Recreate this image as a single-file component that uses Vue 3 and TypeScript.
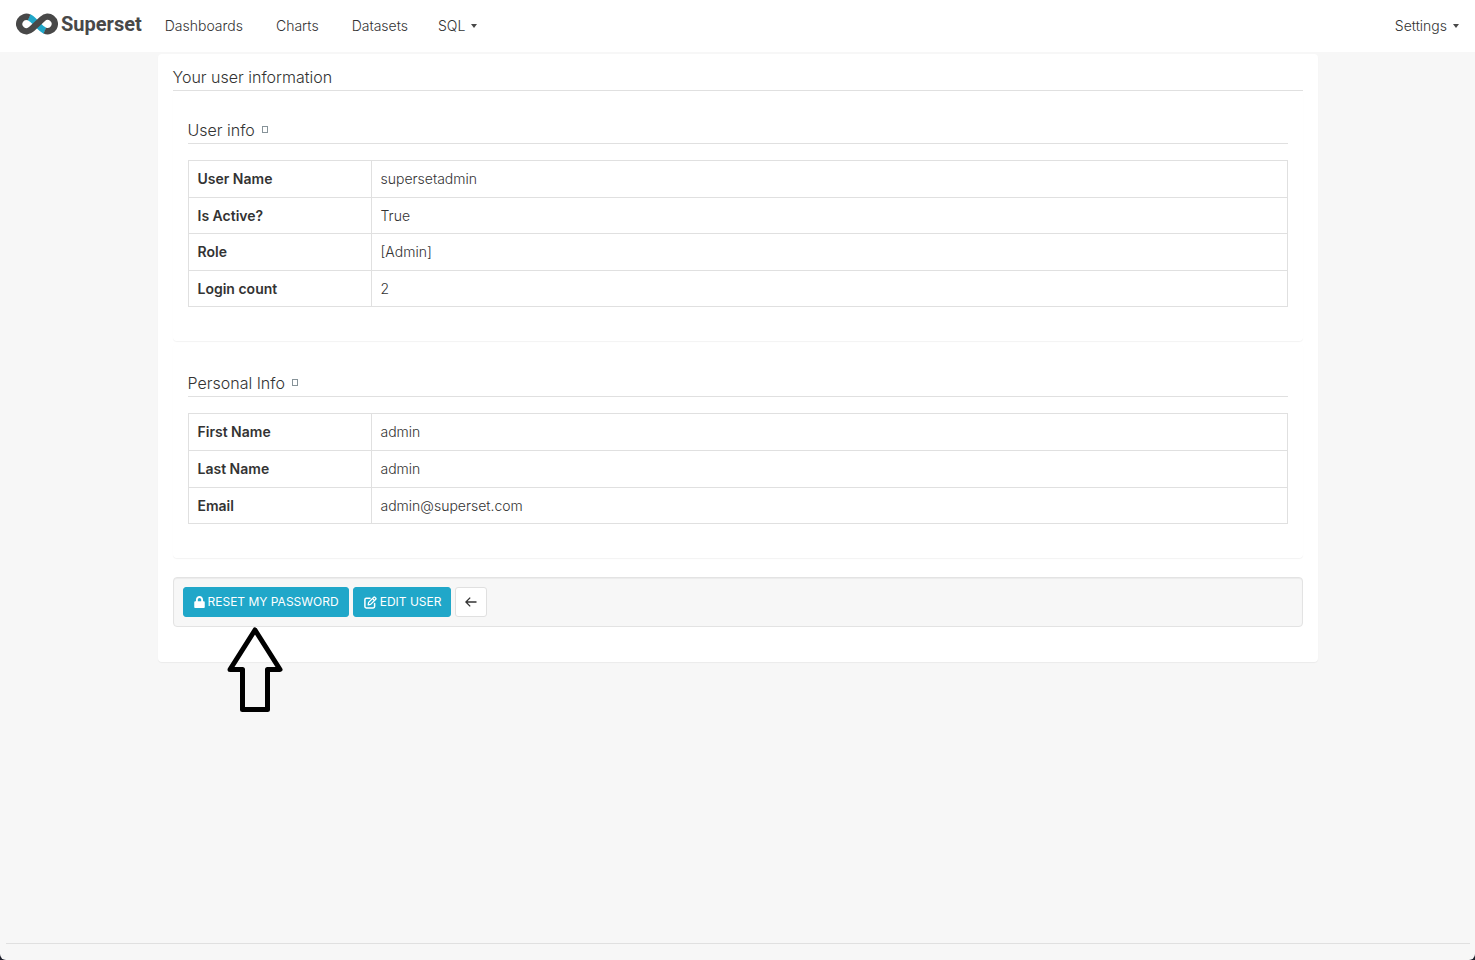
<script setup lang="ts">
interface InfoRow {
  label: string
  value: string
}

interface InfoSection {
  id: string
  title: string
  rows: InfoRow[]
}

const links: string[] = ['Dashboards', 'Charts', 'Datasets']

const sections: InfoSection[] = [
  {
    id: 'user-info',
    title: 'User info',
    rows: [
      { label: 'User Name', value: 'supersetadmin' },
      { label: 'Is Active?', value: 'True' },
      { label: 'Role', value: '[Admin]' },
      { label: 'Login count', value: '2' },
    ],
  },
  {
    id: 'personal-info',
    title: 'Personal Info',
    rows: [
      { label: 'First Name', value: 'admin' },
      { label: 'Last Name', value: 'admin' },
      { label: 'Email', value: 'admin@superset.com' },
    ],
  },
]
</script>

<template>
  <div class="page">
    <header class="navbar">
      <a class="brand" href="#" aria-label="Superset">
        <svg class="brand-mark" width="42" height="22" viewBox="0 0 42 22" fill="none" stroke-width="6.400" aria-hidden="true">
          <path d="M13 4.300C16 5.500 18 8 21 11S26 16.500 29 17.700" stroke="#20a7c9" />
          <path d="M13.200 4.400A7.200 7.200 0 1 0 15.500 16.100L26.500 5.900A7.200 7.200 0 1 1 28.800 17.600" stroke="#484848" />
        </svg>
        <span class="brand-name">Superset</span>
      </a>
      <nav class="menu" aria-label="Main">
        <a v-for="link in links" :key="link" class="menu-link" href="#">{{ link }}</a>
        <button class="menu-toggle" type="button">SQL<span class="caret"></span></button>
      </nav>
      <button class="menu-toggle settings" type="button">Settings<span class="caret"></span></button>
    </header>

    <main class="card">
      <h1 class="title">Your user information</h1>
      <section v-for="section in sections" :key="section.id" class="panel">
        <h2 class="title">
          <a class="panel-link" href="#">{{ section.title }}<span class="missing-glyph"></span></a>
        </h2>
        <table class="info">
          <tbody>
            <tr v-for="row in section.rows" :key="row.label">
              <th scope="row">{{ row.label }}</th>
              <td>{{ row.value }}</td>
            </tr>
          </tbody>
        </table>
      </section>

      <div class="actions">
        <button class="btn primary" type="button">
          <svg width="11" height="12" viewBox="0 0 448 512" fill="currentColor" aria-hidden="true">
            <path d="M400 224h-24v-72C376 68.200 307.800 0 224 0S72 68.200 72 152v72H48c-26.500 0-48 21.500-48 48v192c0 26.500 21.500 48 48 48h352c26.500 0 48-21.500 48-48V272c0-26.500-21.500-48-48-48zm-104 0H152v-72c0-39.700 32.300-72 72-72s72 32.300 72 72v72z" />
          </svg>
          Reset my password
        </button>
        <button class="btn primary" type="button">
          <svg width="13" height="13" viewBox="0 0 13 13" fill="none" stroke="currentColor" stroke-width="1.500" stroke-linejoin="round" stroke-linecap="round" aria-hidden="true">
            <path d="M6 2.300H2.300Q0.900 2.300 0.900 3.700V10.600Q0.900 12 2.300 12H9.200Q10.600 12 10.600 10.600V7.400" />
            <path d="M4.200 8.800L4.600 6.400 9.800 1.200Q10.300 0.800 10.800 1.200L11.800 2.200Q12.200 2.700 11.800 3.200L6.600 8.400ZM8.600 2.600L10.400 4.400" stroke-width="1.300" />
          </svg>
          Edit user
        </button>
        <button class="btn back" type="button" aria-label="Back">
          <svg width="12" height="10" viewBox="0 0 12 10" fill="none" stroke="currentColor" stroke-width="1.300" aria-hidden="true">
            <path d="M11.500 5H1M5.200 0.600L0.900 5l4.300 4.400" />
          </svg>
        </button>
        <svg class="pointer" width="56" height="86" viewBox="0 0 56 86" fill="none" stroke="#000" stroke-width="5" stroke-linejoin="round" aria-hidden="true">
          <path d="M28 3L53 42.500H40.500V82.500H15.500V42.500H3Z" />
        </svg>
      </div>
    </main>

    <footer class="footer"><hr /></footer>
  </div>
</template>

<style>
html {
  background: #1d1f2b;
}

body {
  margin: 0;
}
</style>

<style scoped>
* {
  box-sizing: border-box;
}

.page {
  display: flex;
  flex-direction: column;
  min-height: 100vh;
  background: #f7f7f7;
  border-radius: 0 0 6px 6px;
  color: #333;
  font-family: Inter, "Liberation Sans", sans-serif;
  font-size: 14px;
  font-weight: 300;
  line-height: 20px;
}

.navbar {
  display: flex;
  align-items: center;
  height: 52px;
  padding: 0 16px;
  background: #fff;
}

.brand {
  display: flex;
  align-items: center;
  gap: 3px;
  padding-bottom: 5px;
  color: #484848;
  text-decoration: none;
}

.brand-name {
  font-family: Roboto, sans-serif;
  font-size: 20px;
  font-weight: 700;
}

.menu {
  display: flex;
  gap: 33px;
  margin-left: 23px;
}

.menu-link,
.menu-toggle {
  color: #333;
  text-decoration: none;
}

.menu-toggle {
  display: flex;
  align-items: center;
  gap: 6px;
  padding: 0;
  border: 0;
  background: none;
  font: inherit;
}

.menu .menu-toggle {
  margin-left: -3px;
}

.settings {
  margin-left: auto;
}

.caret {
  border: 3px solid transparent;
  border-top: 4px solid #484848;
  border-bottom: 0;
}

.card {
  width: calc(100% - 32px);
  max-width: 1160px;
  margin: 2px auto 0;
  padding: 12px 15px 35px;
  background: #fff;
  border-radius: 4px;
  box-shadow: 0 1px 1px rgba(0, 0, 0, 0.05);
}

.title {
  margin: 0;
  padding-bottom: 2px;
  border-bottom: 1px solid #e0e0e0;
  font-size: 16px;
  font-weight: 300;
  line-height: 22px;
}

.panel {
  padding: 28px 15px 34px;
  border-radius: 4px;
  box-shadow: 0 1px 1px rgba(0, 0, 0, 0.05);
}

.panel + .panel {
  margin-top: 3px;
}

.panel-link {
  display: flex;
  align-items: center;
  gap: 7px;
  color: #333;
  text-decoration: none;
}

.missing-glyph {
  width: 6px;
  height: 7px;
  margin-bottom: 2px;
  border: 1px solid #879399;
}

.info {
  width: 100%;
  margin-top: 16px;
  border-collapse: collapse;
  line-height: 1.4;
}

.info th,
.info td {
  padding: 8px 9px;
  border: 1px solid #e0e0e0;
  text-align: left;
}

.info th {
  width: 183px;
  font-weight: 600;
}

.actions {
  position: relative;
  display: flex;
  flex-wrap: wrap;
  gap: 4px;
  margin-top: 19px;
  padding: 9px;
  background: #f7f7f7;
  border: 1px solid #e3e3e3;
  border-radius: 4px;
  box-shadow: inset 0 1px 1px rgba(0, 0, 0, 0.05);
}

.btn {
  display: flex;
  align-items: center;
  justify-content: center;
  gap: 3px;
  height: 30px;
  padding: 0 9px 0 10px;
  border: 1px solid #20a7c9;
  border-radius: 3px;
  font: inherit;
  font-size: 12px;
  text-transform: uppercase;
}

.primary {
  background: #20a7c9;
  color: #fff;
  font-weight: 400;
}

.back {
  width: 32px;
  padding: 0;
  background: #fff;
  border-color: #e0e0e0;
  color: #333;
}

.pointer {
  position: absolute;
  top: 49px;
  left: 53px;
}

.footer {
  margin-top: auto;
  padding: 0 5px 16px 6px;
}

.footer hr {
  margin: 0;
  border: 0;
  border-top: 1px solid #e0e0e0;
}
</style>
